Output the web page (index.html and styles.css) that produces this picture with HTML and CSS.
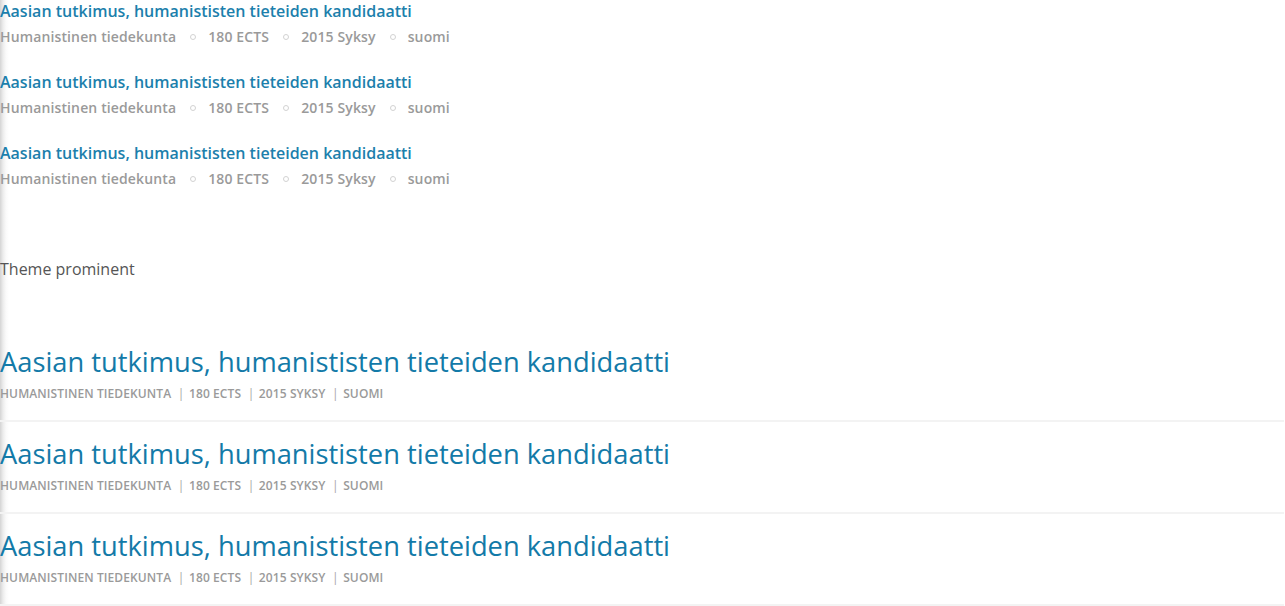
FILE: index.html
```html
<!DOCTYPE html>
<html lang="fi">
<head>
<meta charset="utf-8">
<title>Koulutukset</title>
<link rel="stylesheet" href="styles.css">
</head>
<body>
<div class="page">
  <ul class="list-default">
    <li class="item">
      <a class="item-title" href="#">Aasian tutkimus, humanististen tieteiden kandidaatti</a>
      <div class="item-meta"><span>Humanistinen tiedekunta</span><i class="dot"></i><span>180 ECTS</span><i class="dot"></i><span>2015 Syksy</span><i class="dot"></i><span>suomi</span></div>
    </li>
    <li class="item">
      <a class="item-title" href="#">Aasian tutkimus, humanististen tieteiden kandidaatti</a>
      <div class="item-meta"><span>Humanistinen tiedekunta</span><i class="dot"></i><span>180 ECTS</span><i class="dot"></i><span>2015 Syksy</span><i class="dot"></i><span>suomi</span></div>
    </li>
    <li class="item">
      <a class="item-title" href="#">Aasian tutkimus, humanististen tieteiden kandidaatti</a>
      <div class="item-meta"><span>Humanistinen tiedekunta</span><i class="dot"></i><span>180 ECTS</span><i class="dot"></i><span>2015 Syksy</span><i class="dot"></i><span>suomi</span></div>
    </li>
  </ul>

  <p class="section-label">Theme prominent</p>

  <ul class="list-prominent">
    <li class="p-item">
      <a class="p-title" href="#">Aasian tutkimus, humanististen tieteiden kandidaatti</a>
      <div class="p-meta"><span>Humanistinen tiedekunta</span><i class="bar">|</i><span>180 ECTS</span><i class="bar">|</i><span>2015 Syksy</span><i class="bar">|</i><span>suomi</span></div>
    </li>
    <li class="p-item">
      <a class="p-title" href="#">Aasian tutkimus, humanististen tieteiden kandidaatti</a>
      <div class="p-meta"><span>Humanistinen tiedekunta</span><i class="bar">|</i><span>180 ECTS</span><i class="bar">|</i><span>2015 Syksy</span><i class="bar">|</i><span>suomi</span></div>
    </li>
    <li class="p-item">
      <a class="p-title" href="#">Aasian tutkimus, humanististen tieteiden kandidaatti</a>
      <div class="p-meta"><span>Humanistinen tiedekunta</span><i class="bar">|</i><span>180 ECTS</span><i class="bar">|</i><span>2015 Syksy</span><i class="bar">|</i><span>suomi</span></div>
    </li>
  </ul>
</div>
</body>
</html>
```

FILE: styles.css
```css
html, body {
  margin: 0;
  padding: 0;
  height: 100%;
}
body {
  font-family: "Open Sans", "Liberation Sans", sans-serif;
  background: linear-gradient(to right, #d4d4d4 0, #ececec 3px, #fafafa 6px, #ffffff 9px);
  overflow: hidden;
}
.page {
  padding: 0 1px 0 0;
}
ul {
  list-style: none;
  margin: 0;
  padding: 0;
}
.item {
  margin-bottom: 23px;
}
.item-title {
  display: block;
  font-size: 16px;
  font-weight: 600;
  line-height: 22px;
  color: #1c7fac;
  text-decoration: none;
}
.item-meta {
  margin-top: 4px;
  display: flex;
  align-items: center;
  font-size: 14px;
  font-weight: 600;
  line-height: 22px;
  letter-spacing: 0.13px;
  color: #9a9a9a;
}
.dot {
  width: 4px;
  height: 4px;
  border: 1px solid #d2d2d2;
  border-radius: 50%;
  margin: 0 12px 0 14px;
}
.section-label {
  margin: 68px 0 0;
  font-size: 16px;
  line-height: 22px;
  color: #555;
}
.list-prominent {
  margin-top: 50px;
}
.p-item {
  padding: 13px 0 17px;
  border-bottom: 2px solid #f3f3f3;
}
.p-title {
  display: block;
  font-size: 27.3px;
  font-weight: 450;
  line-height: 38px;
  color: #137aa8;
  text-decoration: none;
}
.p-meta {
  margin-top: 4px;
  display: flex;
  font-size: 12px;
  font-weight: 600;
  line-height: 18px;
  color: #9a9a9a;
  text-transform: uppercase;
  letter-spacing: 0.1px;
}
.bar {
  font-style: normal;
  font-weight: 400;
  margin: 0 4.5px 0 6.5px;
  color: #a6a6a6;
}
```
